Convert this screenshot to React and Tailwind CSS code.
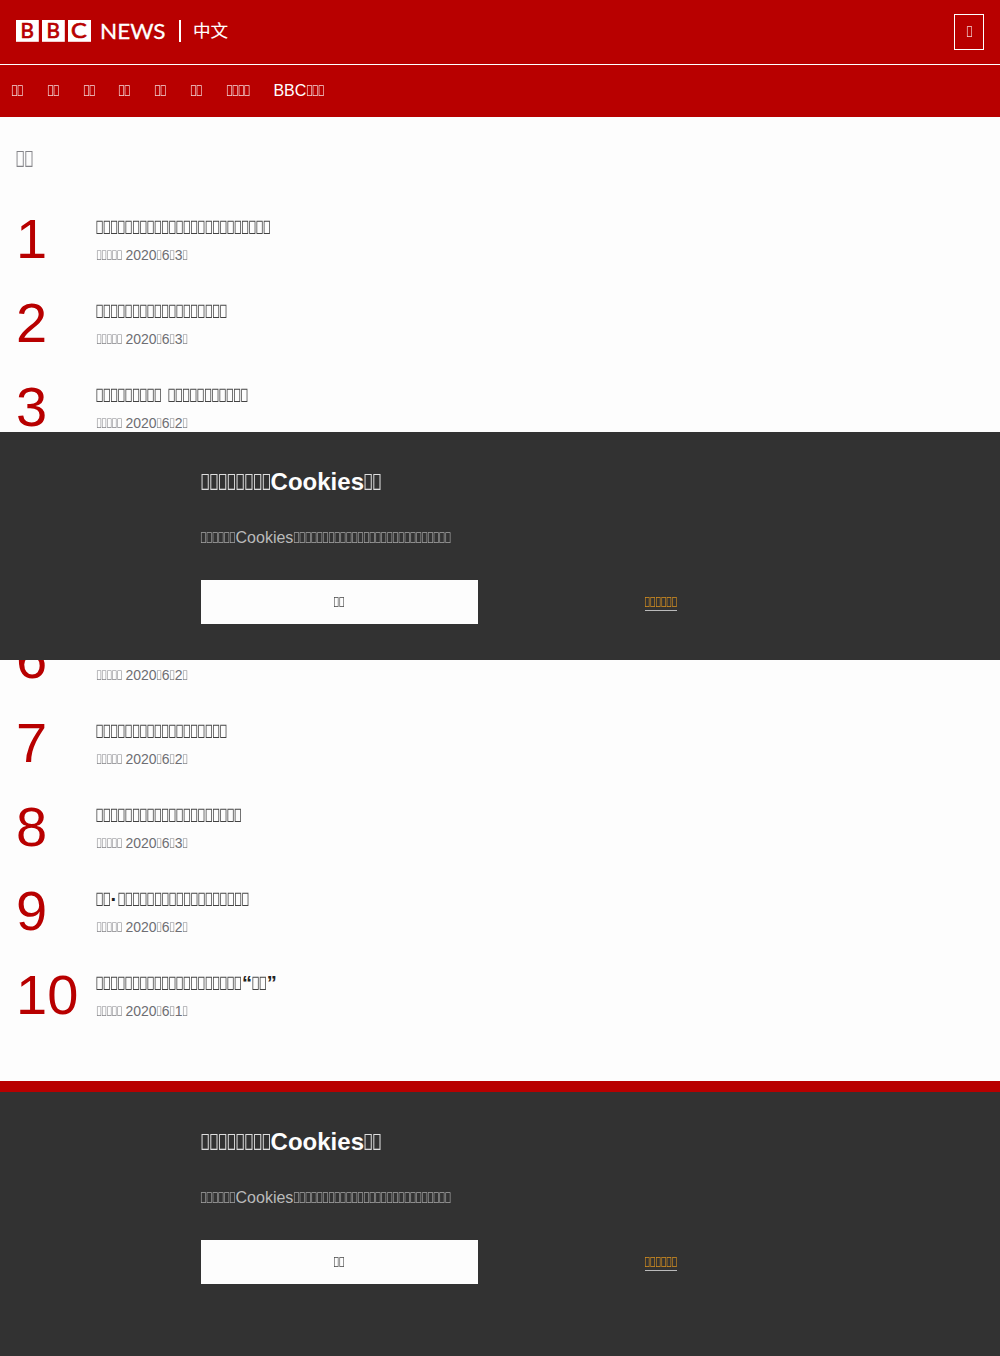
const SANS = "font-['Liberation_Sans',Arial,sans-serif]";

// A run of n narrow missing-glyph boxes set as text.
function Tofu({ n }) {
  return (
    <span className="inline-block whitespace-nowrap font-normal leading-none opacity-85 will-change-[opacity]" style={{ width: `${n * 0.3652}em` }}>
      <span className="-ml-[0.036em] inline-block origin-left scale-x-[0.775] font-['Noto_Sans',sans-serif] text-[0.94em] leading-none tracking-[-0.1em]">
        {'\uE000'.repeat(n)}
      </span>
    </span>
  );
}

// Numbers in a parts list become glyph boxes; strings are printed as they are.
function Mixed({ parts }) {
  return parts.map((p, i) => (typeof p === 'number' ? <Tofu key={i} n={p} /> : <span key={i}>{p}</span>));
}

const NAV = [[2], [2], [2], [2], [2], [2], [4], ['BBC', 3]];

const STORIES = [
  { title: [24], day: '3' },
  { title: [18], day: '3' },
  { title: [9, ' ', 11], day: '2' },
  { title: [18], day: '2' },
  { title: [18], day: '2' },
  { title: [18], day: '2' },
  { title: [18], day: '2' },
  { title: [20], day: '3' },
  { title: [2, '·', 18], day: '2' },
  { title: [20, '“', 2, '”'], day: '1' },
];

function Logo() {
  return (
    <svg width="224" height="40" viewBox="0 -8 224 40" className="block" fill="#fff">
      <rect x="0" y="1" width="22.8" height="21.8" />
      <rect x="26" y="1" width="22.8" height="21.8" />
      <rect x="52" y="1" width="23" height="21.8" />
      <g fill="#b80000" stroke="#b80000" strokeWidth="0.7" fontFamily="Lato" fontSize="20.5">
        <text x="4.4" y="19" textLength="13.4" lengthAdjust="spacingAndGlyphs">B</text>
        <text x="30.4" y="19" textLength="13.4" lengthAdjust="spacingAndGlyphs">B</text>
        <text x="55" y="19" textLength="15.8" lengthAdjust="spacingAndGlyphs">C</text>
      </g>
      <text x="84" y="20" fontFamily="Lato" fontSize="22" stroke="#fff" strokeWidth="0.3" textLength="65.5" lengthAdjust="spacingAndGlyphs">NEWS</text>
      <rect x="163" y="1" width="2" height="22" />
      <text x="177" y="18.2" fontFamily="Noto Sans CJK SC, sans-serif" fontSize="17.6" stroke="#fff" strokeWidth="0.1">中文</text>
    </svg>
  );
}

function CookieBanner({ className }) {
  return (
    <section className={`w-full bg-[#323232] pt-8 ${className}`}>
      <div className="mx-auto w-[599px]">
        <h2 className="h-9 whitespace-nowrap text-2xl font-bold leading-9 text-[#fdfdfd]">
          <Mixed parts={[8, 'Cookies', 2]} />
        </h2>
        <p className="mt-[28px] h-5 whitespace-nowrap text-base leading-5 text-[#bababa]">
          <Mixed parts={[6, 'Cookies', 27]} />
        </p>
        <div className="mt-8 grid grid-cols-2 gap-[45px]">
          <button className="flex h-11 items-center justify-center bg-[#fdfdfd] text-[15px] leading-5 text-[#222222]">
            <Tofu n={2} />
          </button>
          <div className="flex h-11 items-center justify-center text-[15px] leading-5 text-[#f6a21d]">
            <a className="flex h-[18px] items-center border-b border-[#bababa]"><Tofu n={6} /></a>
          </div>
        </div>
      </div>
    </section>
  );
}

export default function App() {
  return (
    <div className={`relative flex h-[1356px] w-full flex-col overflow-hidden bg-[#fdfdfd] text-[#222222] ${SANS}`}>
      <header className="bg-[#b80000] text-white">
        <div className="flex h-[65px] items-start justify-between border-b border-white px-4">
          <a className="mt-[11px]"><Logo /></a>
          <button className="mt-[14px] flex h-9 w-[30px] items-center justify-center border border-white text-base leading-5">
            <Tofu n={1} />
          </button>
        </div>
        <nav className="flex h-[52px] items-center gap-6 px-3 text-base leading-5">
          {NAV.map((parts, i) => (
            <a key={i} className="whitespace-nowrap"><Mixed parts={parts} /></a>
          ))}
        </nav>
      </header>

      <main className="h-[964px] shrink-0 px-4 pt-7">
        <h1 className="h-7 text-2xl leading-7 text-[#6e6e73]"><Tofu n={2} /></h1>
        <ol className="mt-[38px]">
          {STORIES.map((s, i) => (
            <li key={i} className="flex h-[84px]">
              <span className="w-20 shrink-0 text-[56px] leading-[56px] text-[#b80000]">{i + 1}</span>
              <div className="pt-1">
                <h3 className="h-6 whitespace-pre text-xl font-bold leading-6"><Mixed parts={s.title} /></h3>
                <p className="mt-1.5 h-5 whitespace-pre text-sm leading-5 text-[#6e6e73]">
                  <Mixed parts={[5, ' 2020', 1, '6', 1, s.day, 1]} />
                </p>
              </div>
            </li>
          ))}
        </ol>
      </main>

      <footer className="h-[11px] shrink-0 bg-[#b80000]" />
      <CookieBanner className="grow" />
      <CookieBanner className="absolute left-0 top-[432px] z-10 h-[228px]" />
    </div>
  );
}
